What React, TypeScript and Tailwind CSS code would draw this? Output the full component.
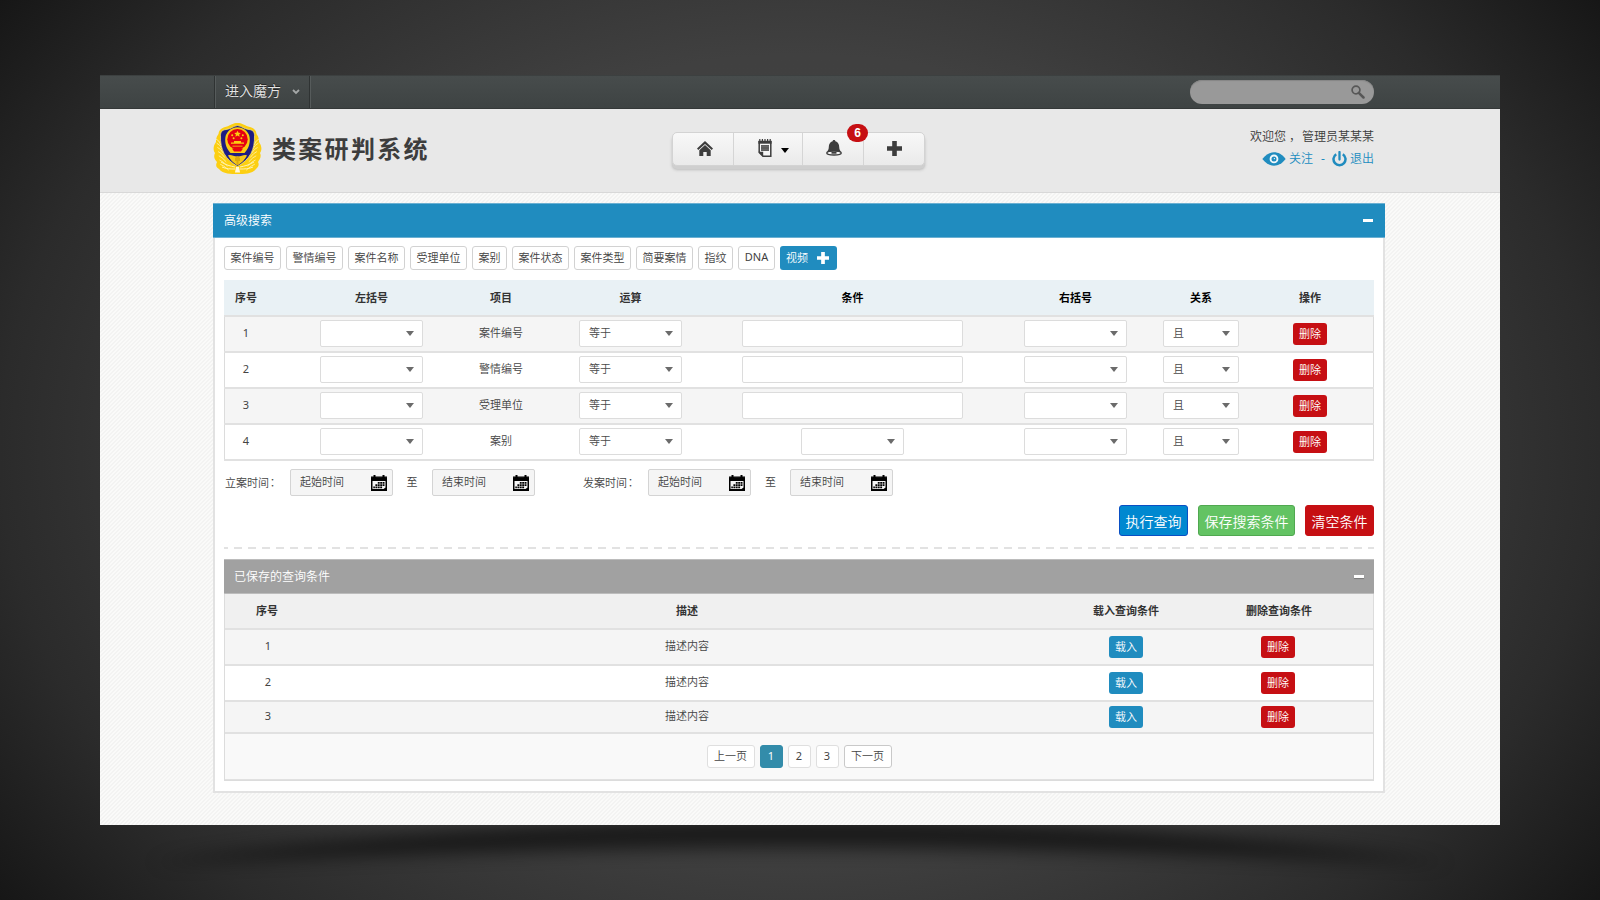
import React from "react";

const FONT = "font-['Noto_Sans','Noto_Sans_CJK_SC',sans-serif]";

function Caret({ className = "" }: { className?: string }) {
  return (
    <svg className={className} width="8" height="5" viewBox="0 0 8 5">
      <path d="M0 0h8L4 5z" fill="currentColor" />
    </svg>
  );
}

function Plus({ size, color }: { size: number; color: string }) {
  return (
    <svg width={size} height={size} viewBox="0 0 15 15">
      <path d="M5.2 0h4.6v5.2H15v4.6H9.8V15H5.2V9.8H0V5.2h5.2z" fill={color} />
    </svg>
  );
}

function Emblem() {
  const leaves = [0, 1, 2, 3, 4, 5, 6];
  return (
    <svg width="49" height="53" viewBox="0 0 49 53">
      <path
        d="M24.500 1C29 1 31 3 35 4.500C40 5.500 43 7.500 43.500 12C46 15 46 18 46 20C49 24 49 28 47 31C49 35 46 38 45 40C47 44 44 46 43 47C39 52 31 52 24.500 52C18 52 10 52 6 47C4 46 2 44 4 40C2 38 0 35 2 31C0 28 0 24 3 20C3 18 3 15 5.500 12C6 7.500 9 5.500 14 4.500C18 3 20 1 24.500 1Z"
        fill="#fccf12"
      />
      {leaves.map((i) => (
        <g key={i} stroke="#fff0a0" strokeWidth="0.9" fill="none">
          <path d={`M${3 + i * 0.7} ${17 + i * 4.2}q3 1 ${5 + i * 0.6} 6`} />
          <path d={`M${46 - i * 0.7} ${17 + i * 4.2}q-3 1 ${-5 - i * 0.6} 6`} />
        </g>
      ))}
      <path
        d="M24.500 3.500C28.500 4 31 7 36 7.500C40 8 41.500 10 41.500 13.500C42 28 37 37 24.500 44.500C12 37 7 28 7.500 13.500C7.500 10 9 8 13 7.500C18 7 20.500 4 24.500 3.500Z"
        fill="#1d1c82"
        stroke="#f4e27a"
        strokeWidth="0.8"
      />
      <path d="M15 33.500c3-1.500 5 1 9.500 1s6.500-2.500 9.500-1c-2 4-5 7-9.500 10c-4.500-3-7.500-6-9.500-10z" fill="#f6c915" />
      <path d="M12.200 17.500a12.300 12.300 0 0 1 24.600 0c0 6-1.800 9.500-5.300 13.500h-14c-3.500-4-5.300-7.500-5.300-13.500z" fill="#fbcb10" />
      <circle cx="24.500" cy="17.300" r="10.200" fill="#e60012" />
      <path d="M24.500 8.700l1 2.100 2.300.2-1.700 1.500.5 2.300-2.100-1.200-2.100 1.200.5-2.300-1.700-1.500 2.300-.2z" fill="#fbcb10" />
      <g fill="#fbcb10">
        <circle cx="19.200" cy="13.200" r="1" />
        <circle cx="29.800" cy="13.200" r="1" />
        <circle cx="20.600" cy="16.300" r="1" />
        <circle cx="28.400" cy="16.300" r="1" />
        <path d="M18 20.500h3V19h7v1.500h3v1.300H18zM19.500 23.700h10v.9h-10z" />
      </g>
      <path d="M19 26.500h11l-2 3h-7z" fill="#e60012" />
      <path d="M22 36l2.500-2 2.500 2v3h-1.500v3l-1 1-1-1v-3H22z" fill="#dba90e" />
      <path d="M8 40c5 3 9 4 14 5M41 40c-5 3-9 4-14 5M9 45c4 2 9 2 13 2M40 45c-4 2-9 2-13 2" stroke="#fff3b5" fill="none" />
      <path d="M23 45h3l1 5.500h-5z" fill="#fff8dc" />
    </svg>
  );
}

function HomeIcon() {
  return (
    <svg width="16" height="15" viewBox="0 0 16 15" fill="#3d3d3d">
      <path d="M8 0L16 7.600L14.700 9.100L8 2.900L1.300 9.100L0 7.600z" />
      <path d="M8 4l5.700 5.300V15H9.700v-4H6.300v4H2.300V9.300z" />
    </svg>
  );
}

function NoteIcon() {
  return (
    <svg className="shrink-0" width="14" height="18" viewBox="0 0 14 18">
      <path d="M1.200 2.500h11.600v14.700H5L1.200 13.500z" fill="#f5f5f5" stroke="#3d3d3d" strokeWidth="1.500" />
      <path d="M.4 2h13.200v2.700H.4z" fill="#3d3d3d" />
      <path d="M1.800 0v3M4.400 0v3M7 0v3M9.600 0v3M12.200 0v3" stroke="#3d3d3d" strokeWidth="1.200" />
      <path d="M3 6.200h8v5.600H3z" fill="#6a6a6a" />
      <path d="M3 6.600h8M3 9h8M3 11.400h8" stroke="#3d3d3d" strokeWidth="0.600" />
      <path d="M.4 12.800h4.800V18z" fill="#3d3d3d" />
    </svg>
  );
}

function BellIcon() {
  return (
    <svg width="16" height="16" viewBox="0 0 16 16">
      <path d="M8 0c1 0 1.300.7 1.400 1.300C12 2 13.200 4.500 13.200 7c0 2.300.8 3.600 1.800 4.800H1C2 10.600 2.800 9.300 2.800 7c0-2.500 1.200-5 3.800-5.700C6.700.7 7 0 8 0z" fill="#3d3d3d" />
      <ellipse cx="8" cy="13" rx="7.200" ry="2" fill="#f3f3f3" stroke="#3d3d3d" strokeWidth="1.400" />
      <path d="M5.500 11.800h5v1.900h-5z" fill="#3d3d3d" />
    </svg>
  );
}

function CalendarIcon() {
  return (
    <svg width="16" height="16" viewBox="0 0 16 16">
      <path d="M0 1.500h16V16H0z" fill="#000" />
      <path d="M3.500 0v3M12.500 0v3" stroke="#000" strokeWidth="2" />
      <path d="M0 1.700h1.800M5.200 1.700h5.600M14.200 1.700H16" stroke="#777" strokeWidth="0.700" />
      <path d="M1.500 6h13v6.500l-2 1.500h-11z" fill="#f5f5f5" />
      <g fill="#000">
        <path d="M6.800 7h1.900v1.800H6.800zM9.200 7h1.900v1.800H9.200zM11.600 7h1.900v1.800h-1.900zM4.400 9.300h1.900v1.800H4.400zM6.800 9.300h1.900v1.800H6.800zM9.200 9.300h1.900v1.800H9.200zM11.600 9.300h1.900v1.800h-1.900zM2.300 11.600h1.600v1.600H2.300zM4.400 11.600h1.900v1.600H4.400zM6.800 11.600h1.900v1.600H6.800zM9.200 11.600h1.900v1.600H9.200z" />
      </g>
    </svg>
  );
}

function EyeIcon() {
  return (
    <svg width="24" height="14" viewBox="0 0 25 15">
      <path d="M0 7.500C4 2.500 8 .4 12.500.4S21 2.500 25 7.500C21 12.500 17 14.600 12.500 14.600S4 12.500 0 7.500z" fill="#208cbf" />
      <circle cx="12.500" cy="7.400" r="3.700" fill="none" stroke="#f2f8fb" strokeWidth="2" />
      <circle cx="12.900" cy="7" r="0.700" fill="#fff" />
    </svg>
  );
}

function PowerIcon() {
  return (
    <svg width="15" height="16" viewBox="0 0 15 16" fill="none" stroke="#208cbf" strokeWidth="2.500">
      <path d="M4.200 3.200A6 6 0 1 0 10.800 3.200" />
      <path d="M7.500 1v7.500" strokeWidth="2.300" strokeLinecap="round" />
    </svg>
  );
}

function Select({ value = "", small = false }: { value?: string; small?: boolean }) {
  return (
    <div
      className={`${small ? "w-[76px]" : "w-[103px]"} flex h-[27px] shrink-0 items-center justify-between rounded-[2px] border border-[#dcdcdc] bg-white pl-[9px] pr-[8px] text-[#6b6b6b]`}
    >
      <span className="text-[#4a4a4a]">{value}</span>
      <Caret />
    </div>
  );
}

function SmallButton({ label, red = false }: { label: string; red?: boolean }) {
  return (
    <button
      className={`${red ? "bg-[#c60f13]" : "bg-[#208cbf]"} h-[22px] w-[34px] shrink-0 rounded-[3px] text-[11px] leading-[22px] text-white`}
    >
      {label}
    </button>
  );
}

function DateBox({ label }: { label: string }) {
  return (
    <div className="flex h-[27px] w-[103px] shrink-0 items-center justify-between rounded-[2px] border border-[#d4d4d4] bg-[#f5f5f5] pl-[9px] pr-[5px]">
      <span>{label}</span>
      <CalendarIcon />
    </div>
  );
}

function Mark({ children }: { children: string }) {
  return <span className="-ml-[2px] font-['Noto_Sans_CJK_TC',sans-serif]">{children}</span>;
}

const cols = [
  { name: "序号", cls: "w-[43px] pl-px" },
  { name: "左括号", cls: "ml-[53px] w-[103px]" },
  { name: "项目", cls: "ml-[52px] w-[52px]" },
  { name: "运算", cls: "ml-[52px] w-[103px]" },
  { name: "条件", cls: "ml-[60px] w-[221px] text-black" },
  { name: "右括号", cls: "ml-[61px] w-[103px] text-black" },
  { name: "关系", cls: "ml-[36px] w-[76px] text-black" },
  { name: "操作", cls: "ml-[54px] w-[34px]" },
];

const items = ["案件编号", "警情编号", "受理单位", "案别"];
const tags = ["案件编号", "警情编号", "案件名称", "受理单位", "案别", "案件状态", "案件类型", "简要案情", "指纹"];

const saved = [
  { n: 1, row: "h-[36px] bg-[#f5f5f5]" },
  { n: 2, row: "h-[36px] bg-white" },
  { n: 3, row: "h-[32px] bg-[#f5f5f5]" },
];

function Cell({ index, children }: { index: number; children: React.ReactNode }) {
  return <div className={`${cols[index].cls} flex shrink-0 justify-center`}>{children}</div>;
}

function Page({ label, cls }: { label: string; cls: string }) {
  return (
    <div className={`${cls} flex h-[23px] items-center justify-center rounded-[3px] border pb-px`}>{label}</div>
  );
}

export default function App() {
  return (
    <div
      className={`${FONT} h-[900px] w-[1600px] overflow-hidden bg-[radial-gradient(ellipse_1000px_760px_at_50%_50%,#424242_0%,#404040_52%,#2b2b2b_80%,#161616_100%)] px-[100px] pt-[75px] text-[11px] font-[350] text-[#444]`}
    >
      <div className="relative">
        <svg className="absolute left-0 top-[730px]" width="1400" height="90" viewBox="0 0 1400 90">
          <defs>
            <filter
              id="soft"
              filterUnits="userSpaceOnUse"
              x="0"
              y="-60"
              width="1400"
              height="200"
              colorInterpolationFilters="sRGB"
            >
              <feGaussianBlur stdDeviation="9" />
            </filter>
          </defs>
          <path d="M50 58Q700 -30 1350 58Q1000 43 700 43Q400 43 50 58z" fill="#000" opacity="0.6" filter="url(#soft)" />
        </svg>
        <div className="relative flex h-[750px] flex-col bg-[#fafaf9] bg-[linear-gradient(135deg,#f3f3f2_25%,transparent_25%,transparent_50%,#f3f3f2_50%,#f3f3f2_75%,transparent_75%)] bg-[size:4px_4px]">
          <div className="flex h-[34px] shrink-0 items-center justify-between border-b border-t border-b-[#343838] border-t-[#3c4040] bg-linear-to-b from-[#474c4c] to-[#3e4343] pl-[114px] pr-[126px]">
            <div className="flex h-full w-[96px] items-center border-l border-r border-[#2f3333] pb-[3px] pl-[10px] text-[14px] text-[#e6e6e6] shadow-[inset_1px_0_0_#565b5b,1px_0_0_#565b5b] [text-shadow:0_-1px_0_#222]">
              <span>进入魔方</span>
              <svg className="ml-[11px] mt-[3px]" width="8" height="6" viewBox="0 0 8 6">
                <path d="M1 1l3 3 3-3" fill="none" stroke="#a5a8a8" strokeWidth="1.800" />
              </svg>
            </div>
            <div className="flex h-[24px] w-[184px] items-center justify-end rounded-full bg-[#999] pr-[9px] shadow-[inset_0_1px_1px_#858585]">
              <svg width="14" height="14" viewBox="0 0 14 14" fill="none" stroke="#575757">
                <circle cx="5" cy="5" r="3.900" strokeWidth="1.700" />
                <path d="M7.800 7.800l4.700 4.700" strokeWidth="2.500" strokeLinecap="round" />
              </svg>
            </div>
          </div>

          <div className="flex h-[84px] shrink-0 items-start border-b border-[#d8d8d8] bg-[#e8e8e8] pl-[113px] pr-[126px]">
            <div className="flex w-[459px] items-center pt-[13px]">
              <Emblem />
              <h1 className="ml-[10px] whitespace-nowrap text-[24px] font-bold leading-[30px] tracking-[2.300px] text-[#3d3d3d]">
                类案研判系统
              </h1>
            </div>
            <div className="relative mt-[23px] flex h-[34px] w-[253px] rounded-[5px] border border-[#d3d3d3] bg-linear-to-b from-[#f8f8f8] to-[#eaeaea] shadow-[0_3px_0_#cfcfcf,0_4px_3px_#bbb]">
              <div className="flex w-[61px] items-center justify-center border-r border-[#d5d5d5] pb-px pl-1">
                <HomeIcon />
              </div>
              <div className="flex w-[69px] items-center border-r border-[#d5d5d5] pb-[2px] pl-[24px] text-black">
                <NoteIcon />
                <Caret className="ml-[9px] mt-[5px]" />
              </div>
              <div className="flex w-[61px] items-center justify-center border-r border-[#d5d5d5] pb-[2px] pl-px">
                <BellIcon />
              </div>
              <div className="flex w-[60px] items-center justify-center pb-[2px]">
                <Plus size={15} color="#3d3d3d" />
              </div>
              <div className="absolute left-[174px] top-[-9px] flex h-[18px] w-[21px] items-center justify-center rounded-full bg-[#c60f13] font-['Liberation_Sans',sans-serif] text-[12px] font-bold text-white">
                6
              </div>
            </div>
            <div className="ml-auto flex flex-col items-end pt-[19px] text-[12px] leading-[18px]">
              <div className="whitespace-nowrap text-[#3a3a3a]">
                欢迎您<span className="inline-block w-[16px] pl-[3px]">，</span>管理员某某某
              </div>
              <div className="mt-[4px] flex items-center text-[#208cbf]">
                <EyeIcon />
                <span className="ml-[3px]">关注</span>
                <span className="mx-[7px] pl-px font-normal">-</span>
                <PowerIcon />
                <span className="ml-[3px]">退出</span>
              </div>
            </div>
          </div>

          <div className="ml-[113px] mt-[10px] flex h-[590px] w-[1172px] flex-col border-2 border-t-0 border-[#e2e2e2] bg-white">
            <div className="mx-[-2px] flex h-[35px] shrink-0 items-center justify-between border-b border-t border-[#6bb0d2] bg-[#208cbf] pl-[11px] pr-[12px] text-[12px] text-white">
              <span>高级搜索</span>
              <span className="h-[3px] w-[10px] bg-white" />
            </div>

            <div className="ml-[9px] mt-[8px] flex h-[24px] shrink-0 gap-[5px] text-[#3f3f3f]">
              {tags.map((t) => (
                <div
                  key={t}
                  className={`${t.length > 2 ? "w-[57px]" : "w-[35px]"} flex items-center justify-center whitespace-nowrap rounded-[3px] border border-[#d2d2d2]`}
                >
                  {t}
                </div>
              ))}
              <div className="flex w-[37px] items-center justify-center rounded-[3px] border border-[#d2d2d2] pb-px font-normal">DNA</div>
              <div className="flex w-[57px] items-center justify-between rounded-[3px] bg-[#208cbf] pl-[6px] pr-[8px] text-white">
                <span>视频</span>
                <Plus size={12} color="#fff" />
              </div>
            </div>

            <div className="ml-[9px] mt-[10px] w-[1150px] shrink-0">
              <div className="flex h-[35px] items-center bg-[#e9f1f5] pt-px font-bold text-[#333]">
                {cols.map((c, i) => (
                  <Cell key={c.name} index={i}>
                    {c.name}
                  </Cell>
                ))}
              </div>
              <div className="border-b-2 border-[#e1e1e1] shadow-[inset_1px_0_0_#dcdcdc,inset_-1px_0_0_#dcdcdc]">
                {items.map((name, i) => (
                  <div
                    key={name}
                    className={`${i % 2 ? "bg-white" : "bg-[#f5f5f5]"} flex h-[36px] items-center border-t-2 border-t-[#e1e1e1] pb-px shadow-[inset_1px_0_0_#dcdcdc,inset_-1px_0_0_#dcdcdc]`}
                  >
                    <Cell index={0}>
                      <span className="font-normal">{i + 1}</span>
                    </Cell>
                    <Cell index={1}>
                      <Select />
                    </Cell>
                    <Cell index={2}>{name}</Cell>
                    <Cell index={3}>
                      <Select value="等于" />
                    </Cell>
                    <Cell index={4}>
                      {i < 3 ? (
                        <div className="h-[27px] w-[221px] rounded-[2px] border border-[#dcdcdc] bg-white" />
                      ) : (
                        <Select />
                      )}
                    </Cell>
                    <Cell index={5}>
                      <Select />
                    </Cell>
                    <Cell index={6}>
                      <Select value="且" small />
                    </Cell>
                    <Cell index={7}>
                      <SmallButton label="删除" red />
                    </Cell>
                  </div>
                ))}
              </div>
            </div>

            <div className="ml-[10px] mt-[8px] flex h-[27px] shrink-0 items-center whitespace-nowrap">
              <span className="w-[65px]">
                立案时间<Mark>：</Mark>
              </span>
              <DateBox label="起始时间" />
              <span className="w-[39px] pr-px text-center">至</span>
              <DateBox label="结束时间" />
              <span className="ml-[48px] w-[65px]">
                发案时间<Mark>：</Mark>
              </span>
              <DateBox label="起始时间" />
              <span className="w-[39px] text-center">至</span>
              <DateBox label="结束时间" />
            </div>

            <div className="mr-[9px] mt-[9px] flex h-[31px] shrink-0 justify-end gap-[10px] text-[14px] text-white [text-shadow:0_-1px_1px_rgba(0,0,0,0.7)]">
              <button className="w-[69px] rounded-[3px] border border-[#0a4fc4] bg-[#0088d0] pt-px">执行查询</button>
              <button className="w-[97px] rounded-[3px] border border-[#50a850] bg-[#63c363] pt-px">保存搜索条件</button>
              <button className="w-[69px] rounded-[3px] border border-[#c60f13] bg-[#c60f13] pt-px">清空条件</button>
            </div>

            <div className="ml-[9px] mt-[11px] h-[2px] w-[1150px] shrink-0 bg-[repeating-linear-gradient(90deg,#e2e2e2_0px,#e2e2e2_4px,transparent_4px,transparent_10px,#e2e2e2_10px,#e2e2e2_14px)]" />

            <div className="ml-[9px] mt-[10px] flex w-[1150px] shrink-0 flex-col border border-t-0 border-[#dcdcdc] bg-[#f9f9f9]">
              <div className="-mx-px flex h-[35px] items-center justify-between border-b border-t border-[#bcbcbc] bg-[#a1a1a1] pl-[10px] pr-[10px] text-[12px] text-white">
                <span>已保存的查询条件</span>
                <span className="h-[3px] w-[10px] bg-white shadow-[0_1px_1px_#777]" />
              </div>
              <div className="flex h-[36px] items-center border-b-2 border-[#e1e1e1] bg-[#f0f0f0] font-bold text-[#333]">
                <span className="ml-[9px] w-[66px] text-center">序号</span>
                <span className="ml-[287px] w-[200px] text-center">描述</span>
                <span className="ml-[289px] w-[100px] text-center">载入查询条件</span>
                <span className="ml-[53px] w-[100px] text-center">删除查询条件</span>
              </div>
              {saved.map((s) => (
                <div key={s.n} className={`${s.row} flex items-center border-b-2 border-[#e1e1e1]`}>
                  <span className="ml-[10px] w-[66px] pb-px text-center font-normal">{s.n}</span>
                  <span className="ml-[286px] w-[200px] pb-px text-center">描述内容</span>
                  <span className="ml-[289px] flex w-[100px] justify-center">
                    <SmallButton label="载入" />
                  </span>
                  <span className="ml-[52px] flex w-[100px] justify-center">
                    <SmallButton label="删除" red />
                  </span>
                </div>
              ))}
              <div className="flex h-[46px] items-center justify-center gap-[5px] border-b border-[#e1e1e1]">
                <Page label="上一页" cls="w-[48px] border-[#dfdfdf] bg-white" />
                <Page label="1" cls="w-[23px] border-[#338caa] bg-[#338caa] font-normal text-white" />
                <Page label="2" cls="w-[23px] border-[#dfdfdf] bg-white font-normal" />
                <Page label="3" cls="w-[23px] border-[#dfdfdf] bg-white font-normal" />
                <Page label="下一页" cls="w-[48px] border-[#c9c9c9] bg-white" />
              </div>
            </div>
          </div>
        </div>
      </div>
    </div>
  );
}
